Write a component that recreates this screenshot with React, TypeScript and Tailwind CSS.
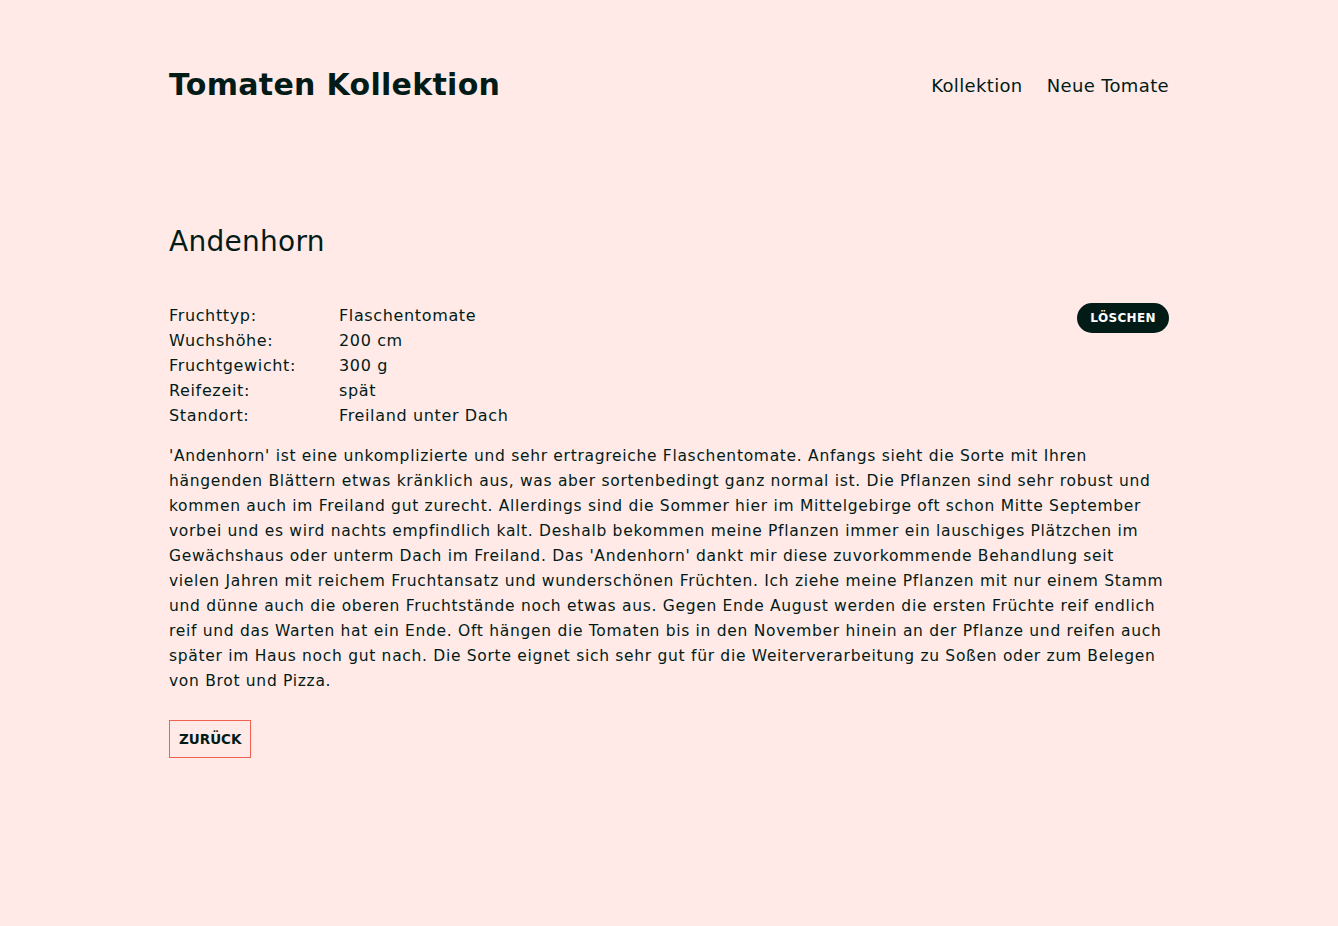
const details: [string, string][] = [
  ['Fruchttyp:', 'Flaschentomate'],
  ['Wuchshöhe:', '200 cm'],
  ['Fruchtgewicht:', '300 g'],
  ['Reifezeit:', 'spät'],
  ['Standort:', 'Freiland unter Dach'],
];

// line breaks kept as in the original layout
const lines = [
  "'Andenhorn' ist eine unkomplizierte und sehr ertragreiche Flaschentomate. Anfangs sieht die Sorte mit Ihren",
  'hängenden Blättern etwas kränklich aus, was aber sortenbedingt ganz normal ist. Die Pflanzen sind sehr robust und',
  'kommen auch im Freiland gut zurecht. Allerdings sind die Sommer hier im Mittelgebirge oft schon Mitte September',
  'vorbei und es wird nachts empfindlich kalt. Deshalb bekommen meine Pflanzen immer ein lauschiges Plätzchen im',
  "Gewächshaus oder unterm Dach im Freiland. Das 'Andenhorn' dankt mir diese zuvorkommende Behandlung seit",
  'vielen Jahren mit reichem Fruchtansatz und wunderschönen Früchten. Ich ziehe meine Pflanzen mit nur einem Stamm',
  'und dünne auch die oberen Fruchtstände noch etwas aus. Gegen Ende August werden die ersten Früchte reif endlich',
  'reif und das Warten hat ein Ende. Oft hängen die Tomaten bis in den November hinein an der Pflanze und reifen auch',
  'später im Haus noch gut nach. Die Sorte eignet sich sehr gut für die Weiterverarbeitung zu Soßen oder zum Belegen',
  'von Brot und Pizza.',
];

export default function App() {
  return (
    <div className="min-h-screen bg-[#ffeae8] text-[#021b17] font-['DejaVu_Sans',sans-serif]">
      <div className="mx-auto w-[1000px] pt-[61px]">
        {/* Header */}
        <header className="flex items-center justify-between">
          <h1 className="text-[30px] leading-[48px] font-bold tracking-[0.01em]">Tomaten Kollektion</h1>
          <nav className="flex gap-6 text-[18px] tracking-[0.02em]">
            <a href="#">Kollektion</a>
            <a href="#">Neue Tomate</a>
          </nav>
        </header>

        <main className="mt-[112px]">
          <h2 className="text-[28px] leading-[42px] tracking-[0.01em]">Andenhorn</h2>

          <div className="mt-[40px] flex items-start justify-between">
            <div className="text-[16px] leading-[25px] tracking-[0.04em]">
              {details.map(([k, v]) => (
                <div key={k} className="flex">
                  <span className="w-[170px]">{k}</span>
                  <span>{v}</span>
                </div>
              ))}
            </div>
            <button className="h-[30px] px-[13px] rounded-full bg-[#021b17] text-white text-[12px] font-bold tracking-[0.03em]">
              LÖSCHEN
            </button>
          </div>

          <p className="mt-[16px] text-[15.5px] leading-[25px] tracking-[0.045em] whitespace-nowrap">
            {lines.map((l, i) => (
              <span key={i} className="block">{l}</span>
            ))}
          </p>

          <button className="mt-[26px] h-[38px] px-[9px] border border-[#f26052] text-[13.5px] font-bold">
            ZURÜCK
          </button>
        </main>
      </div>
    </div>
  );
}
